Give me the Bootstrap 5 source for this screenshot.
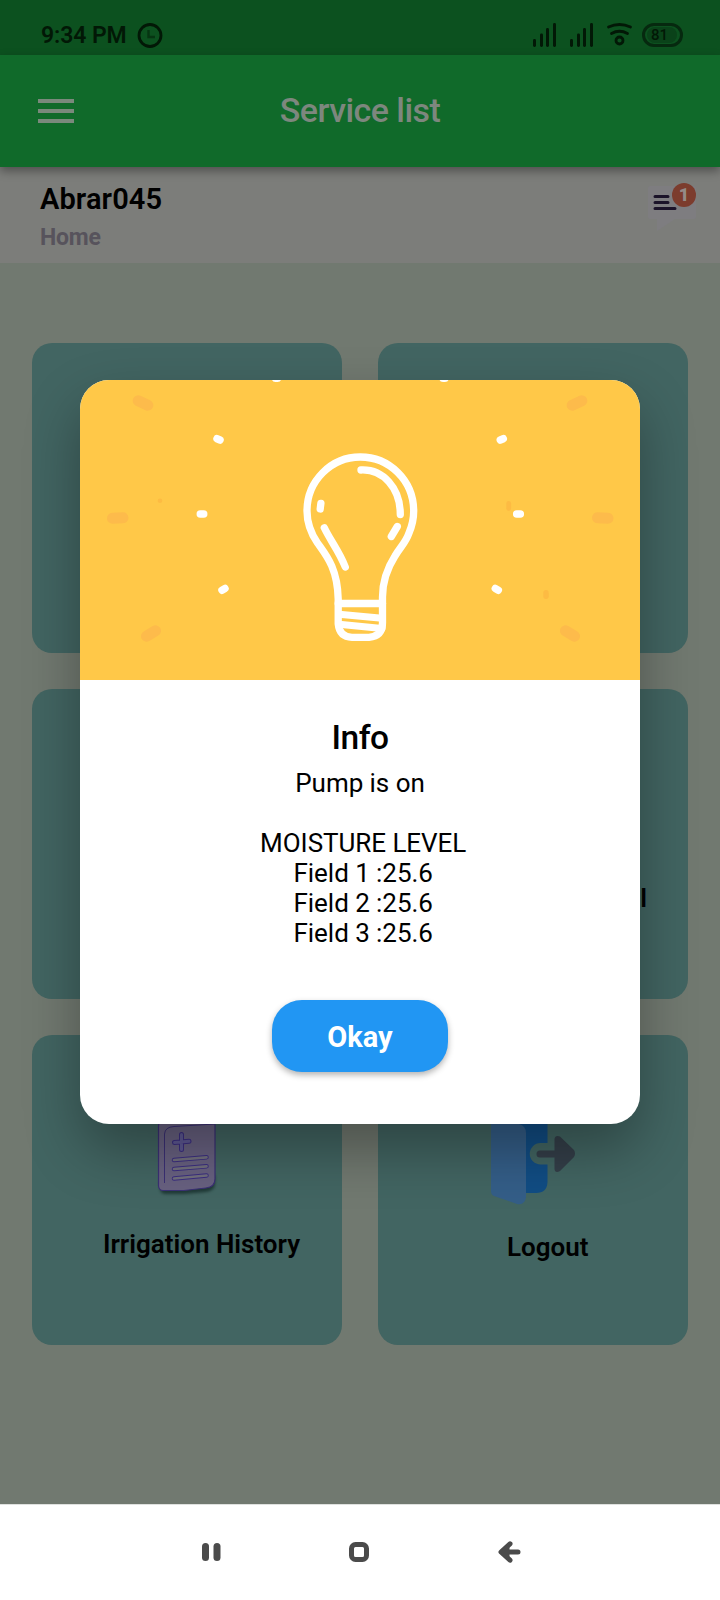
<!DOCTYPE html>
<html lang="en">
<head>
<meta charset="utf-8">
<meta name="viewport" content="width=device-width, initial-scale=1">
<title>Service list</title>
<link href="https://cdn.jsdelivr.net/npm/bootstrap@5.3.0/dist/css/bootstrap.min.css" rel="stylesheet">
<style>
body{font-family:Roboto,"Liberation Sans",sans-serif;background:#717970;color:#000}
.screen{width:720px;height:1600px}
svg{display:block;flex:none}
.status-bar{height:55px;background:#0c511f;padding:14px 37px 0 41px;color:#021806}
.clock-text{font-size:23px;line-height:28px;font-weight:600;letter-spacing:-.1px}
.charge{width:41px;height:24px;border:3px solid #06290f;border-radius:12px;font-size:15px;line-height:18px;padding:1px 0 0 2px;margin-top:9px;font-weight:500}
.charge span{display:block;width:30px;height:16px;padding-left:4px;line-height:17px;border-radius:8px;background:#0a4219}
.app-bar{height:112px;background:#106a2a;box-shadow:0 4px 9px rgba(0,0,0,.36);color:#7d877e;z-index:1}
.burger{width:36px;height:24px;left:38px;top:44px}
.burger i{display:block;height:4px;background:#7a897c}
.app-title{font-size:34px;font-weight:500;line-height:38px;letter-spacing:-.55px;margin-top:-2px}
.user-bar{height:96px;background:#7c7d7a;padding:15px 24px 0 40px}
.user-name{font-size:29px;line-height:34px;font-weight:600;letter-spacing:.1px}
.user-page{font-size:23px;line-height:28px;font-weight:700;letter-spacing:-.2px;color:#57535c;margin-top:8px}
.notice{width:48px;height:52px;margin-top:2px}
.notice-count{width:24px;height:24px;right:0;top:-1px;background:#7c3c2d;color:#948b87;font-size:18px;line-height:24px;font-weight:900}
.tiles{display:grid;grid-template-columns:310px 310px;gap:36px;padding:80px 32px 159px}
.tile{height:310px;border-radius:20px;background:#426562}
.tile-label{font-size:26px;line-height:30px;font-weight:600;white-space:nowrap}
.nav-keys{height:96px;background:#fff;border-top:1px solid #dfe1df;gap:128.5px;padding:0 0 2px 2px}
.dialog-layer{top:380px;left:0;width:720px;z-index:2}
.dialog-box{width:560px;height:744px;border-radius:29px;background:#fff;box-shadow:0 26px 56px rgba(0,0,0,.32)}
.dialog-title{font-size:33.5px;line-height:38px;font-weight:500;letter-spacing:-.5px;margin:39px 0 11px}
.dialog-text{font-size:26px;line-height:30px;letter-spacing:-.05px;white-space:pre}
.okay{width:176px;height:72px;margin-top:52px;padding:3px 0 0;border:0;border-radius:30px;background:#2196f3;color:#fff;font-size:29px;font-weight:700;box-shadow:0 3px 6px rgba(0,0,0,.3)}
</style>
</head>
<body>
<div class="screen position-relative overflow-hidden">
  <div class="status-bar d-flex justify-content-between">
    <div class="d-flex gap-2 pt-2">
      <span class="clock-text text-nowrap">9:34 PM</span>
      <svg width="28" height="28" viewBox="136 21 28 28" fill="none" stroke="#021806" stroke-width="2.8"><circle cx="151" cy="34.500" r="11"/><path d="M149.500 29V36H156" stroke="#063512" stroke-width="2.400"/></svg>
    </div>
    <div class="d-flex">
      <svg width="110" height="41" viewBox="532 14 110 41" fill="#021806">
        <g id="bars"><rect x="533" y="39" width="3" height="8" rx="1.4"/><rect x="540" y="33.5" width="3" height="13.5" rx="1.4"/><rect x="546" y="28" width="3" height="19" rx="1.4"/><rect x="553" y="23" width="3" height="24" rx="1.4"/></g>
        <use href="#bars" x="37"/>
        <g fill="none" stroke="#021806" stroke-width="2.8" stroke-linecap="round"><path d="M608.5 27Q619.5 22 630.5 27M611.5 33.5Q619.5 29 627.5 33.5"/><circle cx="619.5" cy="40.5" r="3.5"/></g>
      </svg>
      <div class="charge"><span>81</span></div>
    </div>
  </div>

  <header class="app-bar position-relative d-flex align-items-center justify-content-center">
    <div class="burger position-absolute d-flex flex-column justify-content-between"><i></i><i></i><i></i></div>
    <div class="app-title">Service list</div>
  </header>

  <div class="user-bar d-flex justify-content-between">
    <div><div class="user-name">Abrar045</div><div class="user-page">Home</div></div>
    <div class="notice position-relative">
      <svg width="48" height="48" viewBox="648 184 48 48"><path d="M650 186H694Q696 186 696 188V217Q696 219 694 219H675L657 231V219H650Q648 219 648 217V188Q648 186 650 186Z" fill="#7e7d80"/><path d="M655 196.5H668M655 202.5H668M655 208.5H675" stroke="#1b1329" stroke-width="3" stroke-linecap="round"/></svg>
      <span class="notice-count position-absolute rounded-circle text-center">1</span>
    </div>
  </div>

  <main class="tiles">
    <div class="tile"></div>
    <div class="tile"></div>
    <div class="tile"></div>
    <div class="tile d-flex justify-content-end"><span class="tile-label" style="margin:194px 41px 0 0">l</span></div>
    <div class="tile d-flex flex-column align-items-start">
      <svg width="80" height="110" viewBox="148 1095 80 110" style="margin:60px 0 0 116px">
        <path d="M160 1180V1188Q160 1194 166 1194H184L206 1192Q215 1191 215 1183V1175Z" fill="#17302d" style="filter:blur(1.5px)" opacity=".8"/>
        <path d="M164 1119Q158.500 1120 158.500 1127V1186Q159 1190.500 163 1190.500H184Q195 1189 206 1188Q215 1187 215 1179V1118Z" fill="#686180" stroke="#3b3075" stroke-width="1.200"/>
        <path d="M164.500 1183V1134Q165 1127 174 1126.500L215 1124" fill="none" stroke="#3b3075"/>
        <path d="M181.500 1134.500V1149.500M174.500 1142.500L189 1141.300" stroke="#3b2e80" stroke-width="5" stroke-linecap="round"/><path d="M181.500 1134.500V1149.500M174.500 1142.500L189 1141.300" stroke="#5e5993" stroke-width="3" stroke-linecap="round"/>
        <path d="M174 1160L206.500 1157.300M174 1169L206.500 1166.300M174 1178.500L206.500 1175.500" stroke="#3b2e80" stroke-width="4.500" stroke-linecap="round"/><path d="M174 1160L206.500 1157.300M174 1169L206.500 1166.300M174 1178.500L206.500 1175.500" stroke="#72707e" stroke-width="2.700" stroke-linecap="round"/>
      </svg>
      <span class="tile-label" style="margin:24px 0 0 71px">Irrigation History</span>
    </div>
    <div class="tile d-flex flex-column align-items-start">
      <svg width="90" height="110" viewBox="488 1100 90 110" style="margin:65px 0 0 110px">
        <path d="M500 1110H547.500V1143H540.500A10.700 10.700 0 0 0 540.500 1164.500H547.500V1182Q547 1193 536 1193H510Z" fill="#114d84"/>
        <path d="M491 1110L519 1124Q526 1126 526 1133V1197Q525 1205.500 517 1204L494 1196Q491 1195 491 1191Z" fill="#345e88"/>
        <path d="M540 1150.500H554.500V1139Q555 1135 560 1136.500L574 1150Q576 1153.700 574 1157L560 1171Q555 1173.500 554.500 1169V1157.500H540A3.500 3.500 0 0 1 540 1150.500Z" fill="#343f49"/>
      </svg>
      <span class="tile-label" style="margin:22px 0 0 129px">Logout</span>
    </div>
  </main>

  <nav class="nav-keys d-flex align-items-center justify-content-center">
    <svg width="20" height="24" viewBox="0 0 20 24" fill="#4b4b4b"><rect x="1" y="3" width="7" height="18" rx="3.500"/><rect x="12.500" y="3" width="7" height="18" rx="3.500"/></svg>
    <svg width="20" height="24" viewBox="0 0 20 24"><rect x="2.500" y="4.500" width="15" height="15" rx="4" fill="none" stroke="#4b4b4b" stroke-width="5"/></svg>
    <svg width="24" height="24" viewBox="0 0 24 24" fill="none" stroke="#4b4b4b" stroke-width="5" stroke-linecap="round" stroke-linejoin="round"><path d="M12 3.800L3 12L12 20.200M5 12H20"/><path d="M4 12L9 8V16Z"/></svg>
  </nav>

  <div class="dialog-layer position-absolute d-flex justify-content-center">
    <div class="dialog-box overflow-hidden d-flex flex-column align-items-center" role="dialog">
      <svg width="560" height="300" viewBox="80 380 560 300">
        <rect x="80" y="380" width="560" height="300" fill="#ffc848"/>
        <g stroke="#fdbb4b" stroke-width="11" stroke-linecap="round"><path d="M138.200 400.800L147.800 405.200M112.500 518.200L123 517.800M146.500 636.200L155.500 630.800M572.200 405.200L581.800 400.800M597.500 517.800L608 518.200M565.500 630.800L574.500 636.200"/></g>
        <g fill="#fdbb43"><circle cx="160" cy="500.700" r="2.300"/><rect x="506.300" y="501" width="4.800" height="10" rx="2.400"/><rect x="543.300" y="590" width="5.400" height="9" rx="2.700"/></g>
        <g stroke="#fff" stroke-width="7.500" stroke-linecap="round"><path d="M217 438.700L220 440M200.300 514H203.700M222 590.200L225 588.500M500.300 440L503.300 438.700M516.700 514H520.300M495.300 588.500L498.300 590.200"/><path d="M275.500 378.300H277.500M443 378.300H445"/></g>
        <g fill="none" stroke="#fff" stroke-width="7.300" stroke-linecap="round" stroke-linejoin="round">
          <path d="M338.200 603.500V624Q339.500 637 352 637.300H369Q382.500 636 382.500 623V597C382.500 580 388 567 395 556C401 546 405.500 543 409 533C412 526 413.700 518 413.700 511C413.500 480 389 457 360.300 457C331 457 307 481 307 511C307 523 312 535 317.500 543C326 555 337.500 568 338.200 599Z"/>
          <path d="M338.200 603.500H382.500"/><path d="M339 614.200L382 618.300M339 624.300L382 628.500" stroke-width="7"/>
          <path d="M361 470C383 469 400.300 488 400.300 514.500M397.300 526.500L391.300 536.500M320.900 503.300L320.200 509M324.300 527.800C330 540 339 551 345.300 567"/>
        </g>
      </svg>
      <div class="dialog-title">Info</div>
      <div class="dialog-text text-center">Pump is on

 MOISTURE LEVEL
 Field 1 :25.6
 Field 2 :25.6
 Field 3 :25.6</div>
      <button class="okay" type="button">Okay</button>
    </div>
  </div>
</div>
<script src="https://cdn.jsdelivr.net/npm/bootstrap@5.3.0/dist/js/bootstrap.bundle.min.js"></script>
</body>
</html>
